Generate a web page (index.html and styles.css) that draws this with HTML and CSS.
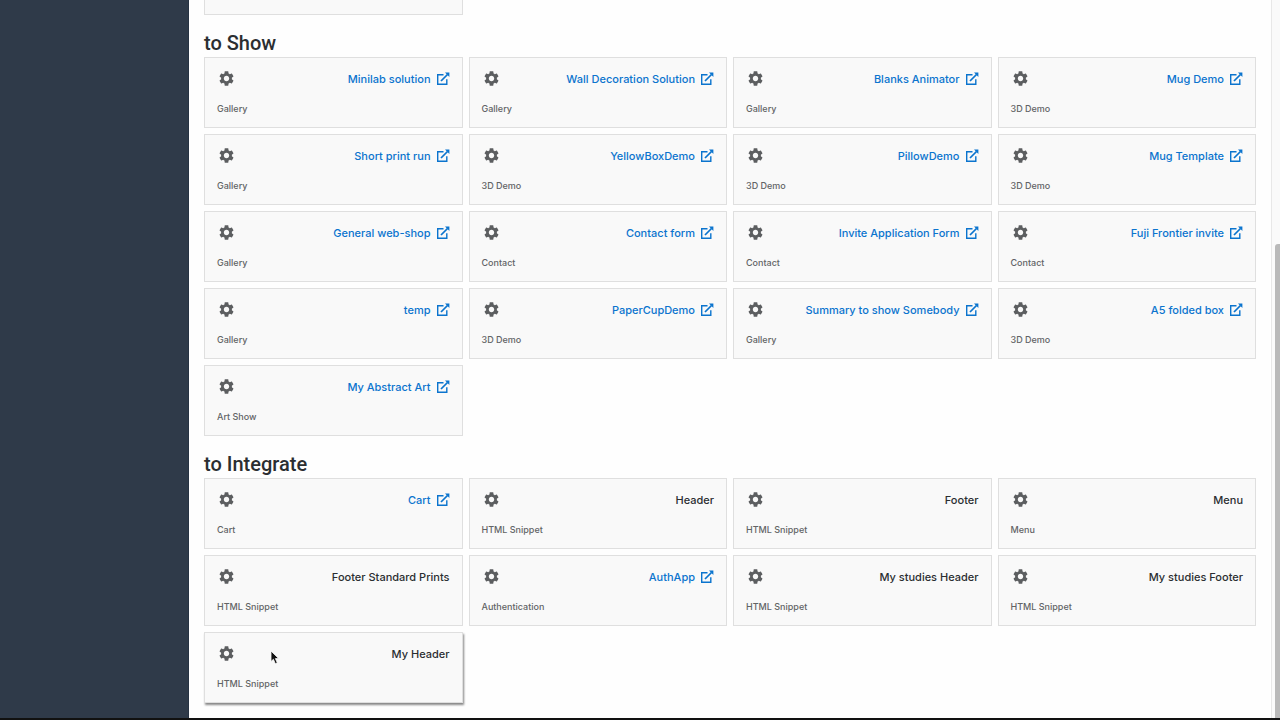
FILE: index.html
```
<!DOCTYPE html>
<html lang="en">

<head>
    <meta charset="UTF-8">
    <meta name="viewport" content="width=device-width, initial-scale=1.0">
    <title>Apps</title>
    <link rel="stylesheet" href="styles.css">
</head>

<body>
    <svg class="sprite" aria-hidden="true">
        <symbol id="gear" viewBox="2 2 20 20">
            <path fill="currentColor" d="M19.14 12.94c.04-.3.06-.61.06-.94 0-.32-.02-.64-.07-.94l2.03-1.58c.18-.14.23-.41.12-.61l-1.92-3.32c-.12-.22-.37-.29-.59-.22l-2.39.96c-.5-.38-1.03-.7-1.62-.94l-.36-2.54c-.04-.24-.24-.41-.48-.41h-3.84c-.24 0-.43.17-.47.41l-.36 2.54c-.59.24-1.13.57-1.62.94l-2.39-.96c-.22-.08-.47 0-.59.22L2.74 8.87c-.12.21-.08.47.12.61l2.03 1.58c-.05.3-.09.63-.09.94s.02.64.07.94l-2.03 1.58c-.18.14-.23.41-.12.61l1.92 3.32c.12.22.37.29.59.22l2.39-.96c.5.38 1.03.7 1.62.94l.36 2.54c.05.24.24.41.48.41h3.84c.24 0 .44-.17.47-.41l.36-2.54c.59-.24 1.13-.56 1.62-.94l2.39.96c.22.08.47 0 .59-.22l1.92-3.32c.12-.22.07-.47-.12-.61l-2.01-1.58zM12 15.6c-1.98 0-3.6-1.62-3.6-3.6s1.62-3.6 3.6-3.6 3.6 1.62 3.6 3.6-1.62 3.6-3.6 3.6z"/>
        </symbol>
        <symbol id="open" viewBox="0 0 14 14">
            <path fill="none" stroke="currentColor" stroke-width="1.4" d="M7.5 2.7H1.7v9.6h9.1V7.2"/>
            <path fill="none" stroke="currentColor" stroke-width="1.7" d="M5 9l6.5-6.5"/>
            <path fill="currentColor" d="M9 .6h4.4V5z"/>
        </symbol>
    </svg>

    <div class="page">
        <aside class="sidebar"></aside>
        <main class="content">
            <div class="grid">
                <div class="card-end"></div>
            </div>

            <h2>to Show</h2>
            <div class="grid">
                <div class="card">
                    <div class="card-top"><button class="gear" aria-label="Settings"><svg><use href="#gear"/></svg></button><a href="#">Minilab solution<svg><use href="#open"/></svg></a></div>
                    <p>Gallery</p>
                </div>
                <div class="card">
                    <div class="card-top"><button class="gear" aria-label="Settings"><svg><use href="#gear"/></svg></button><a href="#">Wall Decoration Solution<svg><use href="#open"/></svg></a></div>
                    <p>Gallery</p>
                </div>
                <div class="card">
                    <div class="card-top"><button class="gear" aria-label="Settings"><svg><use href="#gear"/></svg></button><a href="#">Blanks Animator<svg><use href="#open"/></svg></a></div>
                    <p>Gallery</p>
                </div>
                <div class="card">
                    <div class="card-top"><button class="gear" aria-label="Settings"><svg><use href="#gear"/></svg></button><a href="#">Mug Demo<svg><use href="#open"/></svg></a></div>
                    <p>3D Demo</p>
                </div>
                <div class="card">
                    <div class="card-top"><button class="gear" aria-label="Settings"><svg><use href="#gear"/></svg></button><a href="#">Short print run<svg><use href="#open"/></svg></a></div>
                    <p>Gallery</p>
                </div>
                <div class="card">
                    <div class="card-top"><button class="gear" aria-label="Settings"><svg><use href="#gear"/></svg></button><a href="#">YellowBoxDemo<svg><use href="#open"/></svg></a></div>
                    <p>3D Demo</p>
                </div>
                <div class="card">
                    <div class="card-top"><button class="gear" aria-label="Settings"><svg><use href="#gear"/></svg></button><a href="#">PillowDemo<svg><use href="#open"/></svg></a></div>
                    <p>3D Demo</p>
                </div>
                <div class="card">
                    <div class="card-top"><button class="gear" aria-label="Settings"><svg><use href="#gear"/></svg></button><a href="#">Mug Template<svg><use href="#open"/></svg></a></div>
                    <p>3D Demo</p>
                </div>
                <div class="card">
                    <div class="card-top"><button class="gear" aria-label="Settings"><svg><use href="#gear"/></svg></button><a href="#">General web-shop<svg><use href="#open"/></svg></a></div>
                    <p>Gallery</p>
                </div>
                <div class="card">
                    <div class="card-top"><button class="gear" aria-label="Settings"><svg><use href="#gear"/></svg></button><a href="#">Contact form<svg><use href="#open"/></svg></a></div>
                    <p>Contact</p>
                </div>
                <div class="card">
                    <div class="card-top"><button class="gear" aria-label="Settings"><svg><use href="#gear"/></svg></button><a href="#">Invite Application Form<svg><use href="#open"/></svg></a></div>
                    <p>Contact</p>
                </div>
                <div class="card">
                    <div class="card-top"><button class="gear" aria-label="Settings"><svg><use href="#gear"/></svg></button><a href="#">Fuji Frontier invite<svg><use href="#open"/></svg></a></div>
                    <p>Contact</p>
                </div>
                <div class="card">
                    <div class="card-top"><button class="gear" aria-label="Settings"><svg><use href="#gear"/></svg></button><a href="#">temp<svg><use href="#open"/></svg></a></div>
                    <p>Gallery</p>
                </div>
                <div class="card">
                    <div class="card-top"><button class="gear" aria-label="Settings"><svg><use href="#gear"/></svg></button><a href="#">PaperCupDemo<svg><use href="#open"/></svg></a></div>
                    <p>3D Demo</p>
                </div>
                <div class="card">
                    <div class="card-top"><button class="gear" aria-label="Settings"><svg><use href="#gear"/></svg></button><a href="#">Summary to show Somebody<svg><use href="#open"/></svg></a></div>
                    <p>Gallery</p>
                </div>
                <div class="card">
                    <div class="card-top"><button class="gear" aria-label="Settings"><svg><use href="#gear"/></svg></button><a href="#">A5 folded box<svg><use href="#open"/></svg></a></div>
                    <p>3D Demo</p>
                </div>
                <div class="card">
                    <div class="card-top"><button class="gear" aria-label="Settings"><svg><use href="#gear"/></svg></button><a href="#">My Abstract Art<svg><use href="#open"/></svg></a></div>
                    <p>Art Show</p>
                </div>
            </div>

            <h2>to Integrate</h2>
            <div class="grid">
                <div class="card">
                    <div class="card-top"><button class="gear" aria-label="Settings"><svg><use href="#gear"/></svg></button><a href="#">Cart<svg><use href="#open"/></svg></a></div>
                    <p>Cart</p>
                </div>
                <div class="card">
                    <div class="card-top"><button class="gear" aria-label="Settings"><svg><use href="#gear"/></svg></button><span>Header</span></div>
                    <p>HTML Snippet</p>
                </div>
                <div class="card">
                    <div class="card-top"><button class="gear" aria-label="Settings"><svg><use href="#gear"/></svg></button><span>Footer</span></div>
                    <p>HTML Snippet</p>
                </div>
                <div class="card">
                    <div class="card-top"><button class="gear" aria-label="Settings"><svg><use href="#gear"/></svg></button><span>Menu</span></div>
                    <p>Menu</p>
                </div>
                <div class="card">
                    <div class="card-top"><button class="gear" aria-label="Settings"><svg><use href="#gear"/></svg></button><span>Footer Standard Prints</span></div>
                    <p>HTML Snippet</p>
                </div>
                <div class="card">
                    <div class="card-top"><button class="gear" aria-label="Settings"><svg><use href="#gear"/></svg></button><a href="#">AuthApp<svg><use href="#open"/></svg></a></div>
                    <p>Authentication</p>
                </div>
                <div class="card">
                    <div class="card-top"><button class="gear" aria-label="Settings"><svg><use href="#gear"/></svg></button><span>My studies Header</span></div>
                    <p>HTML Snippet</p>
                </div>
                <div class="card">
                    <div class="card-top"><button class="gear" aria-label="Settings"><svg><use href="#gear"/></svg></button><span>My studies Footer</span></div>
                    <p>HTML Snippet</p>
                </div>
                <div class="card active">
                    <div class="card-top"><button class="gear" aria-label="Settings"><svg><use href="#gear"/></svg></button><span>My Header</span></div>
                    <p>HTML Snippet</p>
                    <svg class="pointer" viewBox="0 0 10 15"><path d="M1 1v10.5l2.4-2.2 1.9 4.4 2-.9-1.9-4.2h3.3z" fill="#111" stroke="#fff" stroke-width=".8"/></svg>
                </div>
            </div>
        </main>
        <div class="scrollbar">
            <div class="thumb"></div>
        </div>
    </div>
    <div class="bottom-bar"></div>
</body>

</html>
```
FILE: styles.css
```
* {
    box-sizing: border-box;
}

body {
    font-family: Inter, "Liberation Sans", sans-serif;
    font-size: 11px;
    font-weight: 500;
    color: #2b2e31;
    background-color: #fefefe;
    display: flex;
    flex-direction: column;
    height: 100vh;
    margin: 0;
    overflow: hidden;
}

.sprite {
    display: none;
}

.page {
    display: flex;
    flex: 1;
    min-height: 0;
}

.sidebar {
    width: 189px;
    background-color: #2f3a49;
    border-right: 1px solid #263242;
}

.content {
    flex: 1;
    padding: 0 15px;
}

h2 {
    font-family: Roboto, "Liberation Sans", sans-serif;
    font-size: 20px;
    font-weight: 500;
    line-height: 28px;
    margin: 14px 0 0;
}

.grid {
    display: grid;
    grid-template-columns: repeat(4, 1fr);
    gap: 6px;
}

.card,
.card-end {
    background-color: #f9f9f9;
    border: 1px solid #dfdfdf;
}

/* last row of the previous group, scrolled off the top */
.card-end {
    height: 15px;
    border-top: none;
}

.card {
    position: relative;
    height: 71px;
    padding: 12px;
}

.card.active {
    box-shadow: 1px 2px 2px #888;
}

.card-top {
    display: flex;
    justify-content: space-between;
    align-items: center;
    height: 18px;
}

.gear {
    display: flex;
    padding: 0 0 2px 2px;
    border: none;
    background: none;
    color: #5c5e60;
    cursor: pointer;
}

.gear svg {
    width: 15px;
    height: 15px;
}

.card a {
    display: flex;
    align-items: center;
    gap: 5px;
    color: #0b74ce;
    text-decoration: none;
}

.card a svg {
    width: 14px;
    height: 14px;
}

.card p {
    font-size: 9px;
    line-height: 12px;
    color: #626466;
    margin: 15px 0 0;
}

.pointer {
    position: absolute;
    left: 65px;
    top: 17px;
    width: 10px;
    height: 15px;
}

.scrollbar {
    width: 9px;
    padding: 244px 0 0 3px;
    background-color: #fafafa;
    border-left: 1px solid #e8e8e8;
}

.thumb {
    height: 100%;
    background-color: #b9b9b9;
    border-radius: 3px 0 0 0;
}

.bottom-bar {
    height: 2px;
    background-color: #111;
}
```
